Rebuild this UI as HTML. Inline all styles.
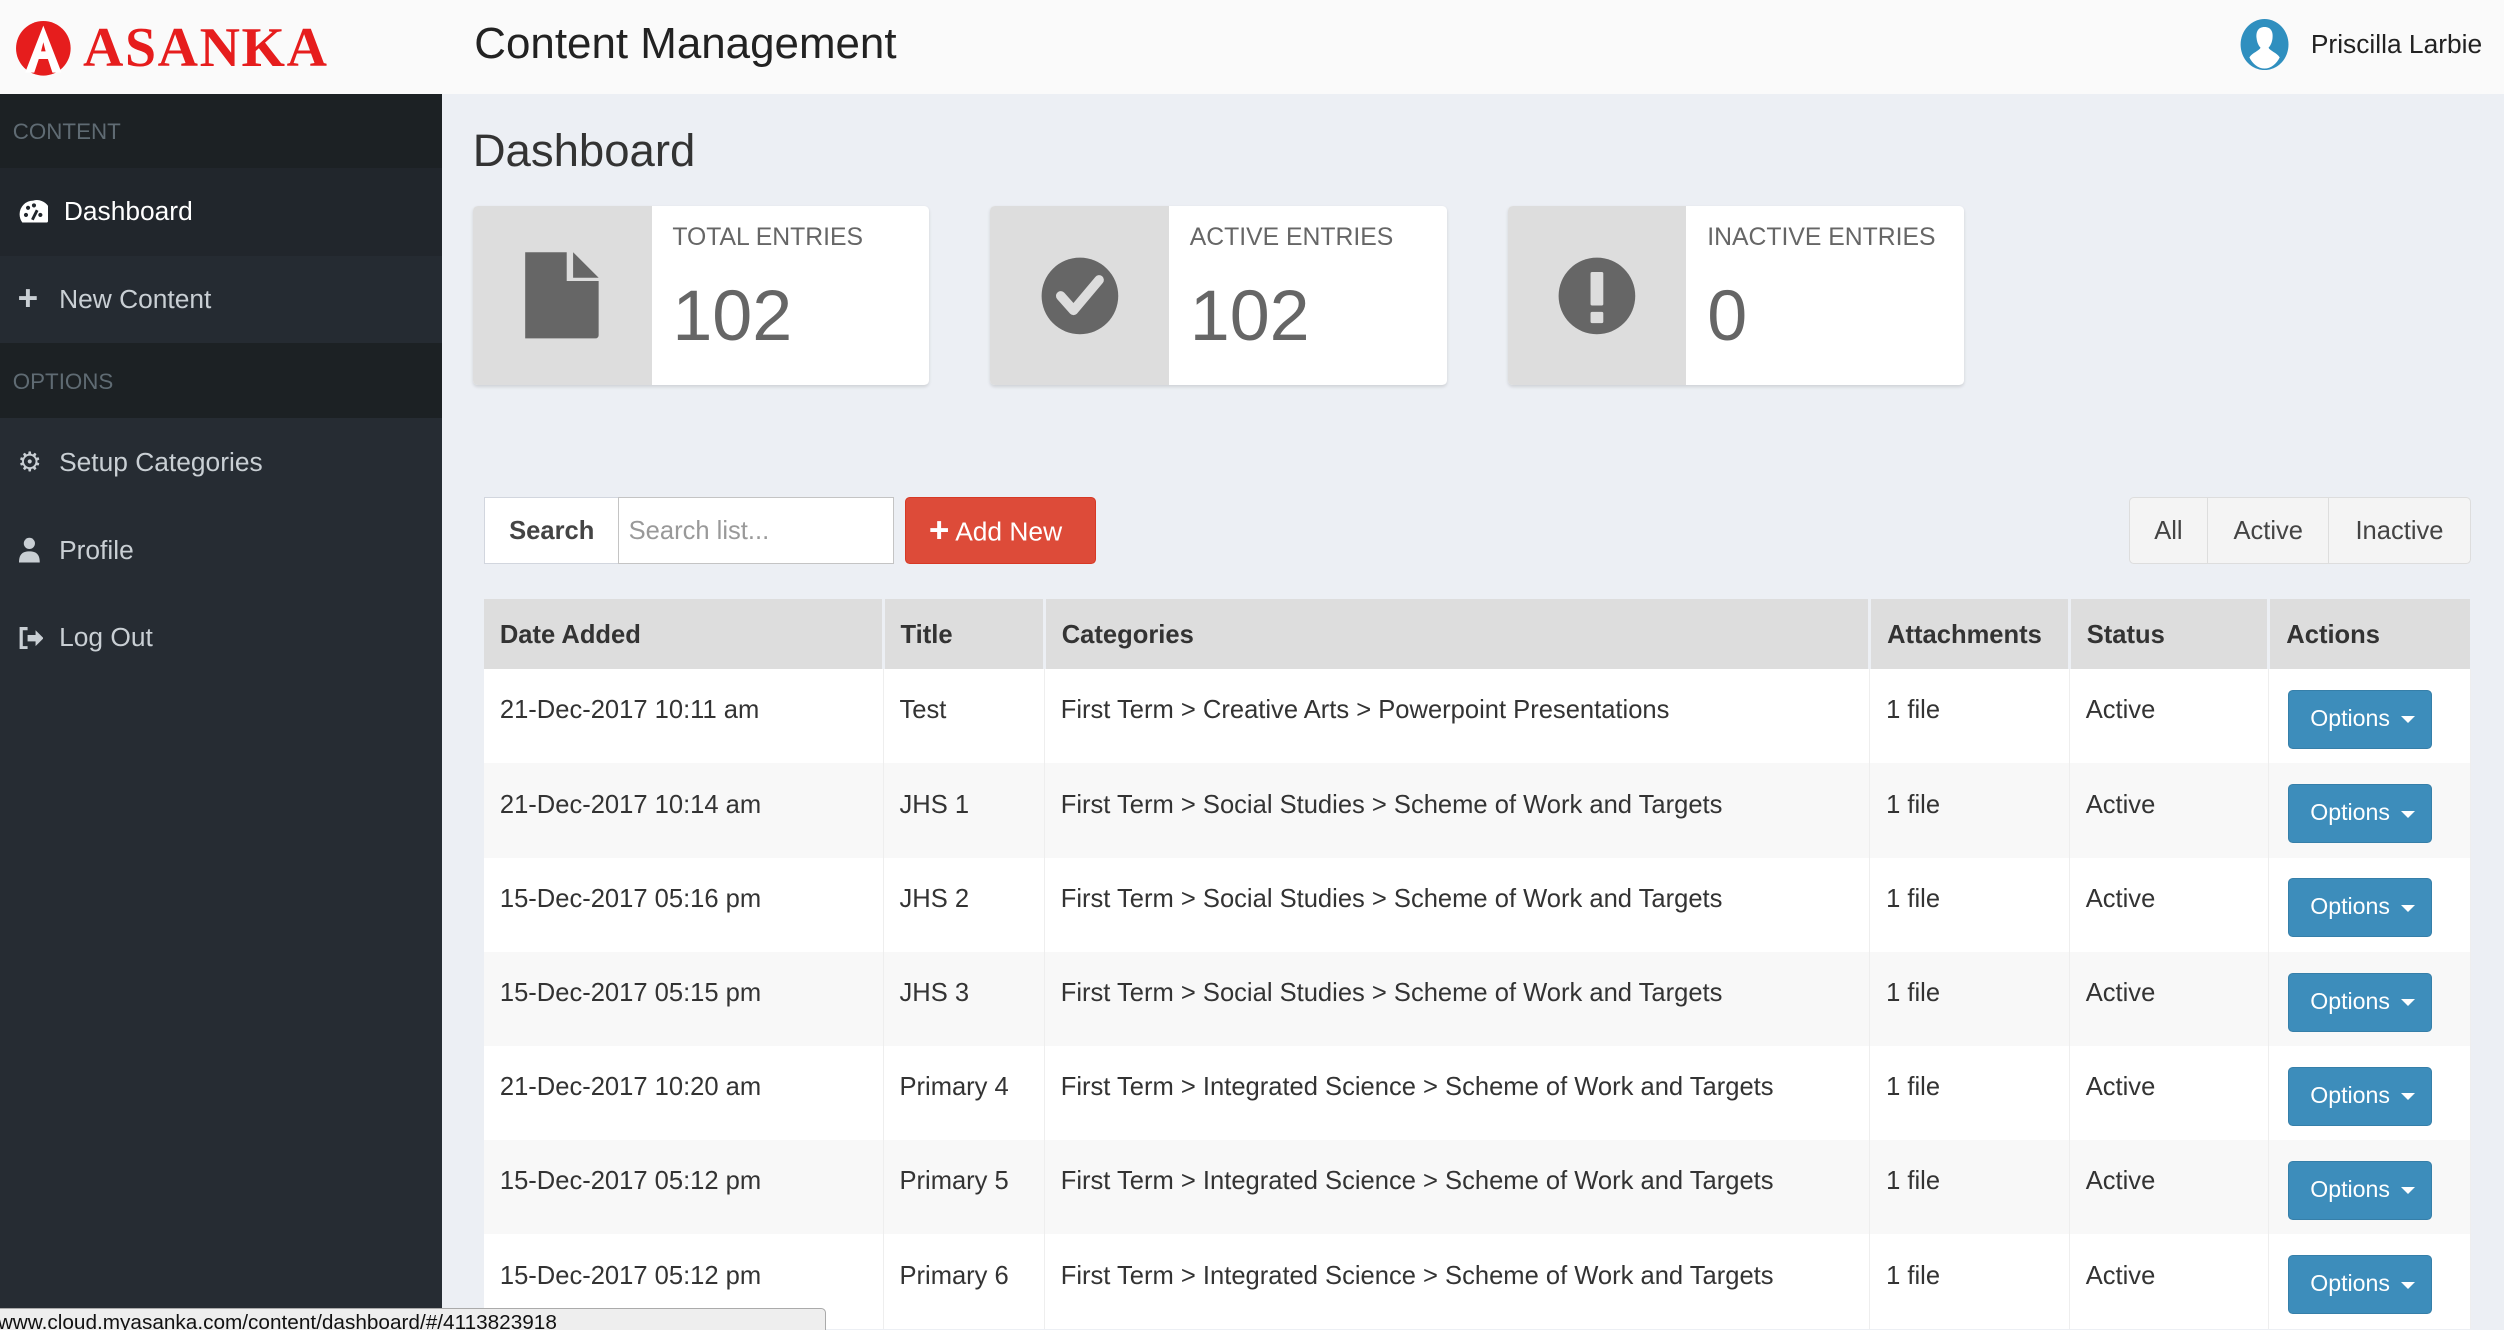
<!DOCTYPE html>
<html><head><meta charset="utf-8"><style>
*{box-sizing:border-box;margin:0;padding:0}
html,body{width:2504px;height:1330px;overflow:hidden}
body{font-family:"Liberation Sans",sans-serif;background:#eceff4;color:#333}
#w{zoom:1.597;width:1568px;height:833px;position:relative;overflow:hidden}
.abs{position:absolute}
#hdr{left:0;top:0;width:1568px;height:59px;background:#fafafa}
#side{left:0;top:59px;width:277px;height:774px;background:#262c33}
.sh{position:absolute;left:0;width:277px;background:#1c2124;color:#5f6b73;font-size:14px;padding-left:8px}
.si{position:absolute;left:0;width:277px;color:#c9cfd4;font-size:16.5px;display:flex;align-items:center}
.card{position:absolute;top:129px;width:286px;height:112px;background:#fff;border-radius:3px;box-shadow:0 1px 2px rgba(0,0,0,.12);overflow:hidden}
.card .ic{position:absolute;left:0;top:0;width:112px;height:112px;background:#dddddd;display:flex;align-items:center;justify-content:center}
.card .lb{position:absolute;left:125px;top:11px;font-size:15.5px;color:#666}
.card .nm{position:absolute;left:125px;top:43px;font-size:45px;color:#666}
table{position:absolute;left:303px;top:375px;width:1244px;border-collapse:collapse;font-size:16px}
th{background:#dddddd;height:44px;text-align:left;padding-left:10px;font-weight:bold;border-right:2px solid #eceff4;color:#333;padding-top:2px}
td{height:59px;padding-left:10px;vertical-align:top;padding-top:17px;border-right:1px solid #eee;color:#333}
tr:nth-child(odd) td{background:#f8f8f8}
tr:nth-child(even) td{background:#fff}
.opt{display:inline-block;width:90px;height:37px;background:#3d8dbb;border:1px solid #367fa9;border-radius:3px;color:#fff;font-size:14.5px;line-height:35px;padding-left:13px;margin-top:-4px;margin-left:2px}
.car{display:inline-block;width:0;height:0;border-left:5px solid transparent;border-right:5px solid transparent;border-top:5px solid #fff;vertical-align:middle;margin-left:3px}
</style></head><body><div id="w">
<div id="hdr" class="abs">
 <svg class="abs" style="left:8px;top:11px" width="38" height="38" viewBox="0 0 40 40"><circle cx="20" cy="20" r="18" fill="#e61d1d"/><path d="M20 5 L8 36 H14 L17 27 H23 L26 36 H32 Z M18.5 22 L20 16 L21.5 22 Z" fill="#fff"/></svg>
 <div class="abs" style="left:52px;top:10px;font-family:'Liberation Serif',serif;font-weight:bold;font-size:35px;color:#e61d1d;letter-spacing:1px">ASANKA</div>
 <div class="abs" style="left:297px;top:12px;font-size:27.5px;color:#222">Content Management</div>
 <svg class="abs" style="left:1402px;top:12px" width="32" height="32" viewBox="0 0 32 32"><ellipse cx="16" cy="16" rx="15" ry="16" fill="#2f8fbf"/><path d="M16 5c-4 0-5.5 3-5 7 .3 3 1.5 5 2.5 6-1 2-5 3-7 6 2 4 5.5 7 9.5 7s7.5-3 9.5-7c-2-3-6-4-7-6 1-1 2.2-3 2.5-6 .5-4-1-7-5-7z" fill="#fff"/></svg>
 <div class="abs" style="left:1447px;top:18px;font-size:16.5px;color:#222">Priscilla Larbie</div>
</div>
<div id="side" class="abs"></div>
<div class="sh" style="top:59px;height:46px;line-height:48px">CONTENT</div>
<div class="si" style="top:105px;height:55px;background:#21262c;color:#fff;padding-left:11px"><svg width="19" height="16" viewBox="0 0 19 16"><path d="M9.5 1A8.5 8.5 0 0 0 1 9.5c0 2 .6 3.7 1.7 5.2h15.6A8.5 8.5 0 0 0 9.5 1z" fill="#fff"/><circle cx="5" cy="10" r="1.3" fill="#21262c"/><circle cx="6.3" cy="5.5" r="1.3" fill="#21262c"/><circle cx="10" cy="4" r="1.3" fill="#21262c"/><circle cx="14" cy="10" r="1.3" fill="#21262c"/><path d="M9 13l3-6" stroke="#21262c" stroke-width="1.8"/></svg><span style="margin-left:10px">Dashboard</span></div>
<div class="si" style="top:160px;height:55px;background:#252b32;padding-left:11px"><span style="font-size:22px;font-weight:bold;width:14px">+</span><span style="margin-left:12px">New Content</span></div>
<div class="sh" style="top:215px;height:47px;line-height:49px">OPTIONS</div>
<div class="si" style="top:262px;height:55px;padding-left:11px"><span style="font-size:17px;width:16px">⚙</span><span style="margin-left:10px">Setup Categories</span></div>
<div class="si" style="top:317px;height:55px;padding-left:12px"><svg width="13" height="16" viewBox="0 0 13 16"><circle cx="6.5" cy="4" r="3.5" fill="#c9cfd4"/><path d="M0 16c0-5 2-7 6.5-7S13 11 13 16z" fill="#c9cfd4"/></svg><span style="margin-left:12px">Profile</span></div>
<div class="si" style="top:372px;height:55px;padding-left:11px"><svg width="16" height="14" viewBox="0 0 16 14"><path d="M6 1H2v12h4" stroke="#c9cfd4" stroke-width="2" fill="none"/><path d="M6 5h5V2l5 5-5 5V9H6z" fill="#c9cfd4"/></svg><span style="margin-left:10px">Log Out</span></div>

<div class="abs" style="left:296px;top:78px;font-size:28.5px;color:#333">Dashboard</div>

<div class="card" style="left:296px"><div class="ic"><svg width="50" height="58" viewBox="0 0 50 58"><path d="M2 2h26v18h20v34a2 2 0 0 1-2 2H2z" fill="#666"/><path d="M32 2l16 16H32z" fill="#666"/></svg></div><div class="lb">TOTAL ENTRIES</div><div class="nm">102</div></div>
<div class="card" style="left:620px"><div class="ic"><svg width="50" height="50" viewBox="0 0 50 50"><circle cx="25" cy="25" r="24" fill="#666"/><path d="M13 25l8 9 16-19" stroke="#ddd" stroke-width="6" fill="none" stroke-linecap="round" stroke-linejoin="round"/></svg></div><div class="lb">ACTIVE ENTRIES</div><div class="nm">102</div></div>
<div class="card" style="left:944px"><div class="ic"><svg width="50" height="50" viewBox="0 0 50 50"><circle cx="25" cy="25" r="24" fill="#666"/><rect x="21" y="10" width="8" height="21" rx="1" fill="#ddd"/><rect x="21" y="35" width="8" height="7" rx="1" fill="#ddd"/></svg></div><div class="lb">INACTIVE ENTRIES</div><div class="nm">0</div></div>

<div class="abs" style="left:303px;top:311px;width:85px;height:42px;background:#fff;border:1px solid #d2d6de;font-weight:bold;font-size:16px;line-height:42px;text-align:center;color:#444">Search</div>
<div class="abs" style="left:387px;top:311px;width:173px;height:42px;background:#fff;border:1px solid #c4c4c4;font-size:16px;line-height:42px;padding-left:6px;color:#999">Search list...</div>
<div class="abs" style="left:567px;top:311px;width:119px;height:42px;background:#dd4b39;border:1px solid #d73925;border-radius:3px;color:#fff;font-size:16.5px;line-height:41px;padding-left:14px"><b style="font-size:22px;vertical-align:-1px">+</b> Add New</div>

<div class="abs" style="left:1333px;top:311px;width:214px;height:42px;background:#f4f4f4;border:1px solid #ddd;border-radius:3px;display:flex;font-size:16px;line-height:42px;color:#444">
 <div style="width:49px;text-align:center;border-right:1px solid #ddd">All</div>
 <div style="width:76px;text-align:center;border-right:1px solid #ddd">Active</div>
 <div style="flex:1;text-align:center">Inactive</div>
</div>

<table>
<colgroup><col style="width:250px"><col style="width:101px"><col style="width:517px"><col style="width:125px"><col style="width:125px"><col style="width:126px"></colgroup>
<tr><th>Date Added</th><th>Title</th><th>Categories</th><th>Attachments</th><th>Status</th><th style="border-right:0">Actions</th></tr>
<tr><td>21-Dec-2017 10:11 am</td><td>Test</td><td>First Term &gt; Creative Arts &gt; Powerpoint Presentations</td><td>1 file</td><td>Active</td><td><span class="opt">Options <i class="car"></i></span></td></tr>
<tr><td>21-Dec-2017 10:14 am</td><td>JHS 1</td><td>First Term &gt; Social Studies &gt; Scheme of Work and Targets</td><td>1 file</td><td>Active</td><td><span class="opt">Options <i class="car"></i></span></td></tr>
<tr><td>15-Dec-2017 05:16 pm</td><td>JHS 2</td><td>First Term &gt; Social Studies &gt; Scheme of Work and Targets</td><td>1 file</td><td>Active</td><td><span class="opt">Options <i class="car"></i></span></td></tr>
<tr><td>15-Dec-2017 05:15 pm</td><td>JHS 3</td><td>First Term &gt; Social Studies &gt; Scheme of Work and Targets</td><td>1 file</td><td>Active</td><td><span class="opt">Options <i class="car"></i></span></td></tr>
<tr><td>21-Dec-2017 10:20 am</td><td>Primary 4</td><td>First Term &gt; Integrated Science &gt; Scheme of Work and Targets</td><td>1 file</td><td>Active</td><td><span class="opt">Options <i class="car"></i></span></td></tr>
<tr><td>15-Dec-2017 05:12 pm</td><td>Primary 5</td><td>First Term &gt; Integrated Science &gt; Scheme of Work and Targets</td><td>1 file</td><td>Active</td><td><span class="opt">Options <i class="car"></i></span></td></tr>
<tr><td>15-Dec-2017 05:12 pm</td><td>Primary 6</td><td>First Term &gt; Integrated Science &gt; Scheme of Work and Targets</td><td>1 file</td><td>Active</td><td><span class="opt">Options <i class="car"></i></span></td></tr>
</table>

<div class="abs" style="left:-2px;top:819px;width:519px;height:20px;background:#eeeeee;border:1px solid #aaa;border-radius:0 3px 0 0;font-size:13px;line-height:18px;color:#111;padding-left:0">www.cloud.myasanka.com/content/dashboard/#/4113823918</div>
</div></body></html>
